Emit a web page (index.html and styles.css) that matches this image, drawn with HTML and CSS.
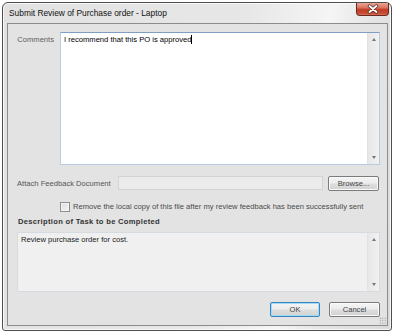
FILE: index.html
```html
<!DOCTYPE html>
<html>
<head>
<meta charset="utf-8">
<link rel="stylesheet" href="styles.css">
</head>
<body>
<div class="window">
  <div class="titlebar">
    <span class="title">Submit Review of Purchase order - Laptop</span>
    <div class="close">
      <svg width="12" height="10" viewBox="0 0 12 10"><path d="M2.5 2 L9.5 8 M9.5 2 L2.5 8" stroke="#5a2a22" stroke-width="3.4" stroke-linecap="round"/><path d="M2.5 2 L9.5 8 M9.5 2 L2.5 8" stroke="#ffffff" stroke-width="1.9" stroke-linecap="round"/></svg>
    </div>
  </div>
  <div class="content">
    <div class="comments-row">
      <span class="lbl comments-lbl">Comments</span>
      <div class="textbox comments-box">
        <div class="text">I recommend that this PO is approved<span class="caret"></span></div>
        <div class="vscroll"><span class="arrow up"></span><span class="arrow down"></span></div>
      </div>
    </div>
    <div class="attach-row">
      <span class="lbl attach-lbl">Attach Feedback Document</span>
      <div class="file-input"></div>
      <button class="btn browse">Browse...</button>
    </div>
    <div class="check-row">
      <span class="checkbox"></span>
      <span class="lbl check-lbl">Remove the local copy of this file after my review feedback has been successfully sent</span>
    </div>
    <div class="section-title">Description of Task to be Completed</div>
    <div class="textbox desc-box">
      <div class="text">Review purchase order for cost.</div>
      <div class="vscroll"><span class="arrow up"></span><span class="arrow down"></span></div>
    </div>
    <div class="buttons">
      <button class="btn ok">OK</button>
      <button class="btn cancel">Cancel</button>
    </div>
    <div class="grip"></div>
  </div>
</div>
</body>
</html>
```
FILE: styles.css
```css
body {
  margin: 0;
  background: #ffffff;
  font-family: "Liberation Sans", Arial, sans-serif;
  font-size: 7.6px;
  color: #222;
}

.window {
  box-sizing: border-box;
  margin: 2px 0 0 2px;
  width: 390px;
  height: 329px;
  border: 1px solid #4e4e4e;
  border-radius: 6px 6px 3px 3px;
  background: linear-gradient(100deg, #e2e2e2 0%, #e7e7e7 55%, #f5f5f5 74%, #e4e4e4 84%, #dadada 100%);
  box-shadow: inset 0 0 0 1px rgba(255, 255, 255, 0.75);
  display: flex;
  flex-direction: column;
}

.titlebar {
  flex: none;
  height: 20px;
  display: flex;
  align-items: flex-start;
  padding-left: 6px;
}

.title {
  margin-top: 5px;
  font-size: 8.4px;
  line-height: 10px;
  color: #111;
}

.close {
  box-sizing: border-box;
  margin-left: auto;
  margin-right: 2px;
  width: 33px;
  height: 13px;
  border: 1px solid #6b2a20;
  border-top: none;
  border-radius: 0 0 4px 4px;
  background: linear-gradient(#eba595 0%, #d9735e 40%, #c23d27 55%, #c64b33 85%, #d8735b 100%);
  display: flex;
  align-items: center;
  justify-content: center;
}

.content {
  flex: 1;
  margin: 0 3px 4px 4px;
  border: 1px solid #8c8c8c;
  background: #e3e3e3;
  padding: 8px 7px 0 9px;
  display: flex;
  flex-direction: column;
  position: relative;
}

.lbl {
  color: #555;
  line-height: 10px;
}

.comments-row {
  display: flex;
  align-items: flex-start;
}

.comments-lbl {
  box-sizing: border-box;
  width: 43px;
  padding-top: 3px;
  padding-right: 6px;
  text-align: right;
  color: #5e5e5e;
}

.textbox {
  box-sizing: border-box;
  display: flex;
}

.textbox .text {
  flex: 1;
  padding: 2px 3px;
  line-height: 10px;
}

.comments-box {
  flex: 1;
  height: 133px;
  background: #ffffff;
  border: 1px solid #b9cde2;
  border-top-color: #7e9fc2;
  color: #000;
}

.caret {
  display: inline-block;
  width: 0;
  height: 9px;
  border-left: 1px solid #000;
  vertical-align: -2px;
}

.vscroll {
  flex: none;
  box-sizing: border-box;
  width: 12px;
  background: linear-gradient(90deg, #e7e7e7, #f1f1f1);
  border-left: 1px solid #e2e2e2;
  display: flex;
  flex-direction: column;
  justify-content: space-between;
  align-items: center;
  padding: 5px 0 5px;
}

.arrow {
  width: 0;
  height: 0;
  border-left: 2.5px solid transparent;
  border-right: 2.5px solid transparent;
}

.arrow.up {
  border-bottom: 3px solid #777;
}

.arrow.down {
  border-top: 3px solid #777;
}

.attach-row {
  display: flex;
  align-items: flex-start;
  margin-top: 11px;
}

.attach-lbl {
  width: 101px;
  padding-top: 3px;
}

.file-input {
  box-sizing: border-box;
  width: 205px;
  height: 14px;
  background: #ebebeb;
  border: 1px solid #d3d3d3;
}

.btn {
  box-sizing: border-box;
  height: 15px;
  padding: 0;
  border: 1px solid #7b7b7b;
  border-radius: 2px;
  background: linear-gradient(#f4f4f4 0%, #ececec 48%, #dedede 52%, #d2d2d2 100%);
  box-shadow: inset 0 0 0 1px #fafafa;
  font-family: inherit;
  font-size: 7.6px;
  line-height: 12px;
  color: #444;
}

.browse {
  width: 51px;
  margin-left: 5px;
}

.check-row {
  display: flex;
  align-items: center;
  margin-top: 11px;
  padding-left: 43px;
}

.checkbox {
  box-sizing: border-box;
  width: 10px;
  height: 10px;
  border: 1px solid #8f8f8f;
  background: linear-gradient(135deg, #dcdcdc, #f7f7f7);
  box-shadow: inset 0 0 0 1px #f4f4f4;
  margin-right: 3px;
}

.check-lbl {
  color: #4a4a4a;
}

.section-title {
  margin-top: 5px;
  padding-left: 1px;
  font-weight: bold;
  letter-spacing: 0.3px;
  line-height: 10px;
  color: #333;
}

.desc-box {
  margin-top: 5px;
  height: 60px;
  background: #f0f0f0;
  border: 1px solid #d5dbe1;
  color: #1a1a1a;
}

.buttons {
  display: flex;
  justify-content: flex-end;
  gap: 9px;
  margin-top: 10px;
}

.ok {
  width: 50px;
  border-color: #3c84bd;
  box-shadow: inset 0 0 0 1px #9fdcf7;
}

.cancel {
  width: 51px;
}

.grip {
  position: absolute;
  right: 1px;
  bottom: 1px;
  width: 7px;
  height: 7px;
  background-image: radial-gradient(circle, #a8a8a8 0.7px, transparent 0.9px);
  background-size: 2.5px 2.5px;
}
```
